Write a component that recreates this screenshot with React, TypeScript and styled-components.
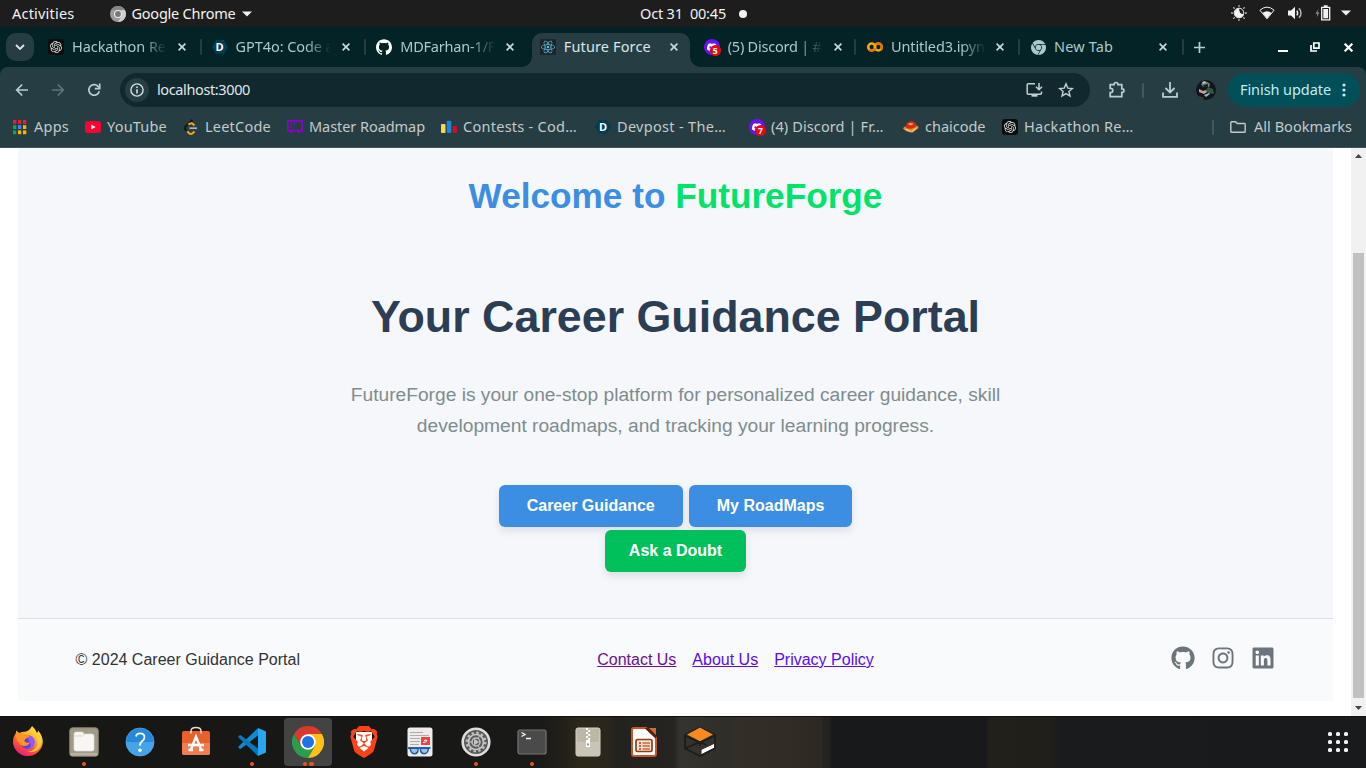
import React, { useLayoutEffect, useRef, useState } from 'react';
import styled, { createGlobalStyle } from 'styled-components';
import { FaGithub, FaInstagram, FaLinkedin } from 'react-icons/fa';
import { SiOpenai, SiReact, SiDiscord, SiGooglechrome, SiBrave, SiGithub } from 'react-icons/si';

const UI_FONT = '"Noto Sans", "Open Sans", sans-serif';
const PAGE_FONT = '"Liberation Sans", Arial, sans-serif';

const GlobalStyle = createGlobalStyle`
  *, *::before, *::after { box-sizing: border-box; }
  body { margin: 0; background: #fff; overflow: hidden; }
  svg { display: block; flex: none; }
`;

const Screen = styled.div`
  width: 1366px;
  height: 768px;
  display: flex;
  flex-direction: column;
  overflow: hidden;
  font-family: ${UI_FONT};
  font-size: 14.5px;
`;

/* ---------- label whose tracking is tuned to a given width ---------- */

const LabelText = styled.span`
  white-space: pre;
  flex: none;
  line-height: 20px;
  margin-bottom: 2px;
`;

function Label({ width, children }: { width: number; children: string }) {
  const ref = useRef<HTMLSpanElement>(null);
  const [spacing, setSpacing] = useState(0);
  useLayoutEffect(() => {
    if (ref.current) {
      const natural = ref.current.getBoundingClientRect().width;
      setSpacing((width - natural) / children.length);
    }
  }, [width, children]);
  return (
    <LabelText ref={ref} style={{ letterSpacing: spacing }}>
      {children}
    </LabelText>
  );
}

/* ---------- desktop top bar ---------- */

const TopBar = styled.header`
  height: 27px;
  flex: none;
  background: #1d1d1d;
  color: #f2f2f2;
  display: grid;
  grid-template-columns: 1fr auto 1fr;
  align-items: center;
  padding: 0 15px 0 12px;
`;

const TopLeft = styled.div`
  display: flex;
  align-items: center;
`;

const AppMenu = styled.div`
  display: flex;
  align-items: center;
  gap: 6px;
  margin-left: 35px;
`;

const Clock = styled.div`
  display: flex;
  align-items: center;
  gap: 13px;
  margin-left: 24px;
`;

const NoticeDot = styled.i`
  width: 8px;
  height: 8px;
  border-radius: 50%;
  background: #f2f2f2;
`;

const Tray = styled.div`
  display: flex;
  justify-content: flex-end;
  align-items: center;
  gap: 12px;
  padding-bottom: 1px;

  & > :last-child {
    margin-left: -2px;
  }
`;

const Caret = () => (
  <svg width="10" height="6" viewBox="0 0 10 6"><path d="M0 .5h10L5 5.500z" fill="#f2f2f2" /></svg>
);

const GreyChromeIcon = () => (
  <svg width="16" height="16" viewBox="0 0 16 16">
    <circle cx="8" cy="8" r="8" fill="#9a9a9a" />
    <path d="M1.100 4A8 8 0 0 1 14.900 4H8z" fill="#868686" />
    <path d="M14.900 4A8 8 0 0 1 8 16l3.500-6V4z" fill="#cfcfcf" />
    <circle cx="8" cy="8" r="4" fill="#eee" />
    <circle cx="8" cy="8" r="2.900" fill="#777" />
  </svg>
);

const NightLightIcon = () => (
  <svg width="16" height="16" viewBox="0 0 16 16">
    <g stroke="#d8d8d8" strokeWidth="1.300">
      <path d="M8 .2v1.600M8 14.200v1.600M.2 8h1.600M14.200 8h1.600M2.400 2.400l1.200 1.200M12.400 12.400l1.200 1.200M2.400 13.600l1.200-1.200M12.400 3.600l1.200-1.200" />
    </g>
    <path d="M8 3.500A4.600 4.600 0 1 0 12.600 9Q8.500 9.500 8 3.500z" fill="#f2f2f2" />
    <circle cx="8" cy="8" r="4.800" fill="none" stroke="#f2f2f2" strokeWidth="1" />
  </svg>
);

const WifiIcon = () => (
  <svg width="16" height="14" viewBox="0 0 16 14">
    <path d="M.9 4.200Q8-2 15.100 4.200L8 12.800z" fill="none" stroke="#f2f2f2" strokeWidth="1" />
    <path d="M3.600 6.800Q8 3.800 12.400 6.800L8 12.800z" fill="#f2f2f2" />
  </svg>
);

const VolumeIcon = () => (
  <svg width="16" height="14" viewBox="0 0 16 14">
    <path d="M1 4.500h3L8 .8v12.400L4 9.500H1z" fill="#f2f2f2" />
    <g fill="none" stroke="#f2f2f2" strokeWidth="1.400">
      <path d="M9.800 4.600q1.800 2.400 0 4.800" />
      <path d="M12 2.200q4 4.800 0 9.600" stroke="#bbb" />
    </g>
  </svg>
);

const BatteryIcon = () => (
  <svg width="16" height="16" viewBox="0 0 16 16">
    <path d="M3.500 4 .4 8.800h2L1.600 12.500 4.500 7.500h-2z" fill="#8b8b8b" />
    <path d="M6.700 2.300h8v12.500h-8z" fill="none" stroke="#f2f2f2" strokeWidth="1.300" />
    <path d="M8.300 4h4.800v9.300H8.300zM8.800.3h3.800v2H8.800z" fill="#f2f2f2" />
  </svg>
);

/* ---------- browser tab strip ---------- */

const TabStrip = styled.div`
  height: 40px;
  flex: none;
  background: #042326;
  color: #a9c9cb;
  display: flex;
  align-items: flex-start;
  padding: 6px 13.500px 0 6px;
`;

const TabSearch = styled.button`
  width: 28px;
  height: 28px;
  margin-right: 6px;
  padding: 0;
  border: 0;
  border-radius: 10px;
  background: #263e43;
  display: grid;
  place-items: center;
`;

const TabBox = styled.div<{ $active?: boolean; $divider?: boolean; $inset?: number }>`
  position: relative;
  width: 163.6px;
  height: 34px;
  padding: 0 0 6px ${(p) => p.$inset ?? 8}px;
  display: flex;
  align-items: center;
  flex: none;
  color: ${(p) => (p.$active ? '#dce5e7' : '#a9c9cb')};

  ${(p) =>
    p.$active &&
    `
    z-index: 1;
    background: #263e43;
    border-radius: 10px 10px 0 0;
    width: 158px;
    margin: 0 4.600px 0 1px;
    &::before, &::after {
      content: '';
      position: absolute;
      bottom: 0;
      width: 10px;
      height: 10px;
    }
    &::before { left: -10px; background: radial-gradient(circle at 0 0, transparent 9.5px, #263e43 10px); }
    &::after { right: -10px; background: radial-gradient(circle at 100% 0, transparent 9.5px, #263e43 10px); }
  `}

  ${(p) =>
    p.$divider &&
    `
    &::after {
      content: '';
      position: absolute;
      right: 1.500px;
      top: 6px;
      width: 2px;
      height: 16px;
      border-radius: 1px;
      background: #263e43;
    }
  `}
`;

const TabTitle = styled.div`
  width: 94px;
  margin-left: 8px;
  display: flex;
  mask-image: linear-gradient(90deg, #000 70px, transparent 95px);
`;

const TabTitlePlain = styled(TabTitle)`
  mask-image: none;
`;

const TabClose = styled.span<{ $gap?: number }>`
  margin-left: ${(p) => p.$gap ?? 12}px;
`;

const CloseGlyph = ({ size = 8, color = '#c8dcdd', weight = 1.6 }) => (
  <svg width={size} height={size} viewBox="0 0 8 8">
    <path d="M.6.6l6.800 6.800M7.400.6.6 7.400" stroke={color} strokeWidth={weight} />
  </svg>
);

const NewTabButton = styled.span`
  height: 28px;
  width: 28px;
  display: grid;
  place-items: center;
`;

const WindowControls = styled.div`
  margin-left: auto;
  height: 28px;
  display: flex;
  align-items: center;
  gap: 22px;

  & > :last-child {
    margin-left: 1.500px;
  }
`;

const Badge = styled.span`
  position: absolute;
  right: -1px;
  bottom: -1px;
  width: 11px;
  height: 11px;
  border-radius: 50%;
  background: #e50914;
  color: #fff;
  font: 700 8.500px/11px "Open Sans", sans-serif;
  text-align: center;
`;

const FaviconBox = styled.span<{ $bg?: string; $radius?: number }>`
  position: relative;
  width: 16px;
  height: 16px;
  flex: none;
  display: grid;
  place-items: center;
  background: ${(p) => p.$bg || 'transparent'};
  border-radius: ${(p) => p.$radius ?? 0}px;
`;

const GptFavicon = () => (
  <FaviconBox $bg="#0d0d0d" $radius={3}><SiOpenai size={12} color="#e8e8e8" /></FaviconBox>
);
const DiscordFavicon = ({ count }: { count: string }) => (
  <FaviconBox $bg="#6a11f5" $radius={8}>
    <SiDiscord size={10} color="#fff" />
    <Badge>{count}</Badge>
  </FaviconBox>
);

const DevpostLetter = styled.span`
  position: absolute;
  inset: 0;
  color: #fff;
  font: 700 11px/16px "Open Sans", sans-serif;
  text-align: center;
`;
const DevpostFavicon = () => (
  <FaviconBox>
    <svg width="16" height="16" viewBox="0 0 16 16"><path d="M4 1h8l4 7-4 7H4L0 8z" fill="#003e54" /></svg>
    <DevpostLetter>D</DevpostLetter>
  </FaviconBox>
);
const ReactFavicon = () => (
  <FaviconBox $bg="#20232a" $radius={1}><SiReact size={14} color="#61dafb" opacity=".85" /></FaviconBox>
);
const ColabFavicon = () => (
  <svg width="16" height="16" viewBox="0 0 16 16">
    <g fill="none" strokeWidth="2.500">
      <circle cx="11.300" cy="8" r="3.500" stroke="#f9ab00" />
      <circle cx="4.700" cy="8" r="3.500" stroke="#f9ab00" />
      <path d="M2.200 10.500A3.500 3.500 0 0 0 8 9.200M8.800 5.500a3.500 3.500 0 0 1 5 5" stroke="#e8710a" />
    </g>
  </svg>
);

/* ---------- toolbar ---------- */

const ToolbarWrap = styled.div`
  flex: none;
  background: #042326;
`;

const Toolbar = styled.div`
  height: 46px;
  background: #263e43;
  border-radius: 8px 8px 0 0;
  display: flex;
  align-items: center;
  padding: 0 6px 0 4px;
`;

const ToolButton = styled.span`
  width: 36px;
  height: 34px;
  display: grid;
  place-items: center;
  flex: none;
`;

const Omnibox = styled.div`
  flex: 1;
  height: 34px;
  margin: 0 9px 0 8px;
  padding: 0 16px 0 5px;
  border-radius: 17px;
  background: #10282e;
  color: #e1e7e8;
  display: flex;
  align-items: center;
`;

const SiteInfo = styled.span`
  width: 24px;
  height: 24px;
  margin-right: 8px;
  border-radius: 50%;
  background: #263e43;
  display: grid;
  place-items: center;
`;

const OmniboxActions = styled.span`
  margin-left: auto;
  display: flex;
  align-items: center;
  gap: 15px;
`;

const ToolDivider = styled.i`
  width: 2px;
  height: 15px;
  margin: 0 8px 0 7px;
  border-radius: 1px;
  background: #43585d;
`;

const UpdateButton = styled.button`
  height: 34px;
  width: 132px;
  margin-left: 4px;
  padding: 0 14px 0 12px;
  border: 0;
  border-radius: 17px;
  background: #004f59;
  color: #c2ecf2;
  font: inherit;
  display: flex;
  align-items: center;
  justify-content: space-between;
`;

const ICON = '#b4d0d2';

const BackIcon = ({ dim }: { dim?: boolean }) => (
  <svg width="14" height="14" viewBox="0 0 14 14">
    <path
      d={dim ? 'M1 7h11M6.800 1.500 12.300 7l-5.500 5.500' : 'M13 7H2M7.200 1.500 1.700 7l5.500 5.500'}
      fill="none"
      stroke={dim ? '#5e7579' : ICON}
      strokeWidth="1.700"
    />
  </svg>
);
const ReloadIcon = () => (
  <svg width="14" height="14" viewBox="0 0 14 14">
    <path d="M12.300 8.200A5.300 5.300 0 1 1 11 3.300L12.500 5" fill="none" stroke={ICON} strokeWidth="1.700" />
    <path d="M12.700.6v5H7.800" fill="none" stroke={ICON} strokeWidth="1.700" />
  </svg>
);
const InfoIcon = () => (
  <svg width="14" height="14" viewBox="0 0 14 14">
    <circle cx="7" cy="7" r="6.100" fill="none" stroke="#d5e0e1" strokeWidth="1.400" />
    <path d="M6.200 6.200h1.600v4.400H6.200zM6.200 3.400h1.600V5H6.200z" fill="#d5e0e1" />
  </svg>
);
const InstallIcon = () => (
  <svg width="17" height="16" viewBox="0 0 17 16">
    <path d="M9 1.800H2.200q-1 0-1 1v8.400q0 1 1 1h12.300q1 0 1-1V9.500" fill="none" stroke="#c4cfd1" strokeWidth="1.500" />
    <path d="M5.500 12h6v2.700h-6z" fill="#c4cfd1" />
    <path d="M13 1v6.200M10 4.700l3 3 3-3" fill="none" stroke="#c4cfd1" strokeWidth="1.500" />
  </svg>
);
const StarIcon = () => (
  <svg width="16" height="16" viewBox="0 0 16 16">
    <path d="M8 1.800l1.800 4.300 4.600.4-3.500 3 1.100 4.600-4-2.500-4 2.500 1.100-4.600-3.500-3 4.600-.4z" fill="none" stroke="#c4cfd1" strokeWidth="1.400" />
  </svg>
);
const PuzzleIcon = () => (
  <svg width="18" height="18" viewBox="0 0 18 18">
    <path d="M2.200 3.700h3.900V3.400a1.900 1.900 0 0 1 3.800 0v.3h3.900v4.100h.4a1.800 1.800 0 0 1 0 3.600h-.4v4.300H2.200v-4h.4a2.200 2.200 0 0 0 0-4.400h-.4z" fill="none" stroke={ICON} strokeWidth="1.700" />
  </svg>
);
const DownloadIcon = () => (
  <svg width="16" height="16" viewBox="0 0 16 16">
    <path d="M8 0v10M3.500 6 8 10.500 12.500 6M1 10.500v4.400h14v-4.400" fill="none" stroke={ICON} strokeWidth="1.800" />
  </svg>
);
const AvatarIcon = () => (
  <svg width="20" height="20" viewBox="0 0 20 20">
    <defs><clipPath id="avatar-clip"><circle cx="10" cy="10" r="10" /></clipPath></defs>
    <g clipPath="url(#avatar-clip)">
      <path d="M0 0h20v20H0z" fill="#12141e" />
      <path d="M5 4q5-5 9 0l-1 3H7z" fill="#74827c" />
      <path d="M6 2l3-1 1 2-3 1z" fill="#bac2bd" />
      <path d="M7 5l5-1v3L8 8z" fill="#202427" />
      <path d="M12 7l5 2 1 5-6-1-2-3z" fill="#31583a" />
      <path d="M3 9l4 2 3-1 1 2-3 2-5-2z" fill="#c6a494" />
      <path d="M8 15l5-2 1 1-4 3z" fill="#9db2c9" />
      <path d="M3 16l5 2-2 2H2z" fill="#4a3d3a" />
    </g>
  </svg>
);
const MoreDots = () => (
  <svg width="4" height="14" viewBox="0 0 4 14" fill="#c2ecf2">
    <circle cx="2" cy="2" r="1.600" /><circle cx="2" cy="7" r="1.600" /><circle cx="2" cy="12" r="1.600" />
  </svg>
);

/* ---------- bookmarks bar ---------- */

const BookmarkBar = styled.nav`
  height: 35px;
  flex: none;
  background: #263e43;
  border-bottom: 1px solid #3f5559;
  color: #c4c9ca;
  display: flex;
  align-items: center;
  padding: 0 14px 6px 12px;
`;

const Bookmark = styled.span<{ $slot?: number }>`
  display: flex;
  align-items: center;
  gap: 6px;
  flex: none;
  width: ${(p) => (p.$slot ? `${p.$slot}px` : 'auto')};
`;

const AllBookmarks = styled(Bookmark)`
  margin-left: auto;
  gap: 8px;
`;

const AppsIcon = () => {
  const colors = ['#f01b33', '#f01b33', '#f01b33', '#12a45a', '#4a83f0', '#fbb300', '#12a45a', '#fbb300', '#fbb300'];
  return (
    <svg width="16" height="16" viewBox="0 0 16 16">
      {colors.map((c, i) => (
        <rect key={i} x={1 + (i % 3) * 5} y={1 + Math.floor(i / 3) * 5.2} width="3.300" height="3.800" fill={c} />
      ))}
    </svg>
  );
};
const YouTubeIcon = () => (
  <svg width="16" height="16" viewBox="0 0 16 16">
    <rect y="2" width="16" height="12" rx="3" fill="#ff0033" />
    <path d="M6.300 5.600 10.600 8l-4.300 2.400z" fill="#fff" />
  </svg>
);
const LeetIcon = () => (
  <svg width="16" height="16" viewBox="0 0 16 16">
    <path d="M9.500.8 2.400 7.600q-1.300 1.500 0 3l3 3" fill="none" stroke="#151515" strokeWidth="2" />
    <path d="M4.200 12.300l2 2q1.700 1.300 3.400 0l1.900-1.800M5.500 5.800l1-1q1.800-1.200 3.200 0l1.800 1.800" fill="none" stroke="#ffa116" strokeWidth="2" />
    <path d="M6.500 9.200H14" stroke="#b3b3b3" strokeWidth="1.700" />
  </svg>
);
const RoadmapIcon = () => (
  <svg width="16" height="16" viewBox="0 0 16 16">
    <path d="M.8 1.800h14.400v9.900H.8z" fill="none" stroke="#8804c8" strokeWidth="1.700" />
    <path d="M3 4h2v1.600H3zM6.500 4h2v1.600h-2zM3 7.500h2v1.600H3zM2 12l2 3 2-3zM10 12l2 3 2-3z" fill="#8804c8" />
  </svg>
);
const CodeforcesIcon = () => (
  <svg width="16" height="16" viewBox="0 0 16 16">
    <rect y="5" width="4.500" height="9" rx="1" fill="#f8d64e" />
    <rect x="5.800" y="1.700" width="4.500" height="12.300" rx="1" fill="#1c86d8" />
    <rect x="11.500" y="6.800" width="4.500" height="7.200" rx="1" fill="#c1132b" />
  </svg>
);
const ChaiIcon = () => (
  <svg width="16" height="16" viewBox="0 0 16 16">
    <path d="M0 9.500Q1 7 5 7l9-.5q2 1 1.500 2.500L10 13.500Q4 14 0 9.500z" fill="#d98a32" />
    <path d="M3 6.500Q4 2 9 2.200q4.500 1 4.500 4.800Q10 11 3 9z" fill="#d22b16" />
    <path d="M5 5Q7.500 3.200 10.500 5 8 7.500 5 5z" fill="#f5a049" />
    <path d="M2 10l6.500 2.500L13.500 9" fill="none" stroke="#f2dcae" />
  </svg>
);
const FolderIcon = () => (
  <svg width="16" height="16" viewBox="0 0 16 16">
    <path d="M.8 3.500q0-.8.8-.8h4l1.600 1.800h7.200q.8 0 .8.8v7.200q0 .8-.8.8H1.600q-.8 0-.8-.8z" fill="none" stroke="#c4c9ca" strokeWidth="1.400" />
  </svg>
);

/* ---------- web page ---------- */

const Viewport = styled.main`
  height: 568px;
  flex: none;
  display: flex;
  background: #fff;
  font-family: ${PAGE_FONT};
  font-size: 16px;
`;

const Site = styled.div`
  width: 1315px;
  height: 553px;
  margin: 0 18px;
  display: flex;
  flex-direction: column;
  background: #f5f7fb;
`;

const Hero = styled.section`
  height: 470px;
  padding-top: 28px;
  display: flex;
  flex-direction: column;
  align-items: center;
`;

const Welcome = styled.h2`
  margin: 0;
  font-size: 35.2px;
  line-height: 40px;
  font-weight: 700;
  color: #3b8ee2;
`;

const Brand = styled.span`
  color: #00e36b;
`;

const Title = styled.h1`
  margin: 73px 0 0;
  font-size: 44.8px;
  line-height: 55px;
  font-weight: 700;
  color: #2c3e54;
`;

const Lead = styled.p`
  width: 700px;
  margin: 36px 0 43.560px;
  font-size: 19.2px;
  line-height: 30.72px;
  text-align: center;
  color: #7f8c8d;
`;

const Actions = styled.div`
  display: flex;
  flex-wrap: wrap;
  justify-content: center;
  gap: 3px 6px;
  width: 400px;
`;

const ActionButton = styled.button<{ $accent?: boolean }>`
  height: 42px;
  padding: 0 ${(p) => (p.$accent ? 24 : 28)}px;
  border: 0;
  border-radius: 6px;
  background: ${(p) => (p.$accent ? '#00c05c' : '#3b8ee2')};
  box-shadow: 0 4px 8px rgba(0, 0, 0, 0.1);
  color: #fff;
  font: 700 16px/18px ${PAGE_FONT};
`;

const Footer = styled.footer`
  height: 83px;
  padding: 0 58px 0 57.600px;
  border-top: 1px solid #dcdfe3;
  background: #f8fafc;
  color: #333;
  display: flex;
  align-items: center;
  justify-content: space-between;
`;

const FooterLinks = styled.div`
  display: flex;
  gap: 16px;
`;

const FooterLink = styled.a<{ $visited?: boolean }>`
  color: ${(p) => (p.$visited ? '#6b0f94' : '#5a0cf0')};
  text-decoration: underline;
`;

const Socials = styled.div`
  display: flex;
  gap: 16px;
  margin-bottom: 4px;
  color: #6c757d;
`;

const ScrollTrack = styled.div`
  width: 15px;
  background: #f1f1f1;
  display: flex;
  flex-direction: column;
  align-items: center;
  padding: 6px 0;
`;

const ScrollThumb = styled.div`
  width: 11px;
  height: 445px;
  margin: 95px 0 8px;
  background: #c1c1c1;
`;

const ScrollArrow = ({ down }: { down?: boolean }) => (
  <svg width="7" height="4" viewBox="0 0 7 4"><path d={down ? 'M0 0h7L3.500 4z' : 'M0 4h7L3.500 0z'} fill="#444" /></svg>
);

/* ---------- dock ---------- */

const Dock = styled.footer`
  height: 52px;
  flex: none;
  display: flex;
  align-items: center;
  gap: 8px;
  padding: 0 18px 0 4px;
  box-shadow: inset 0 1px 0 #111;
  background: linear-gradient(
    90deg,
    #171716 0, #171716 400px, #1a1a19 540px, #201e19 558px, #2d271b 580px, #2b261c 608px,
    #23221e 616px, #252420 674px, #35332d 680px, #302e29 728px, #332f28 736px, #302b25 800px,
    #2d2922 821px, #24231f 824px, #21211e 830px, #18191b 832px, #18191b 986px,
    #21201b 989px, #201f1a 1052px, #1a1b1d 1060px, #191a1c 1366px
  );
`;

const DockItem = styled.div<{ $active?: boolean }>`
  position: relative;
  width: 48px;
  height: 48px;
  border-radius: 4px;
  display: grid;
  place-items: center;
  background: ${(p) => (p.$active ? '#434343' : 'transparent')};
`;

const Running = styled.span`
  position: absolute;
  left: 0;
  right: 0;
  bottom: 0;
  display: flex;
  justify-content: center;
  gap: 2px;
`;

const RunDot = styled.i`
  width: 4.500px;
  height: 4.500px;
  border-radius: 50%;
  background: #e95420;
`;

const AppGrid = styled.div`
  margin-left: auto;
  display: grid;
  grid-template-columns: repeat(3, 4px);
  gap: 4px;
`;

const GridDot = styled.i`
  width: 4px;
  height: 4px;
  border-radius: 1.500px;
  background: #f4f4f4;
`;

const FirefoxIcon = () => (
  <svg width="32" height="32" viewBox="0 0 32 32">
    <defs>
      <linearGradient id="fx" x1=".8" y1="0" x2=".25" y2="1">
        <stop offset="0" stopColor="#fff34f" /><stop offset=".35" stopColor="#ffb52b" />
        <stop offset=".65" stopColor="#ff5b35" /><stop offset="1" stopColor="#f0147f" />
      </linearGradient>
    </defs>
    <path d="M20 0q3.500 3 5 7 1-.8 1.200-2.500 4.800 6 4.600 12A15 15 0 0 1 1 17Q.8 11 4 7V4.500l3.500 2.700Q10 5.500 13 5.800 18 4.500 20 0z" fill="url(#fx)" />
    <circle cx="15.500" cy="16" r="7" fill="#6a3fd0" />
    <path d="M15 10q6-1 8 5 0 7-7 8 4-3 2-6z" fill="#9159ff" />
    <path d="M3.500 8Q9 5.500 13 8.500l5 .3q-.5 2.500-4 3.700-2 1-1.500 3 2.500 2 5.500 1-2 4-6.500 3.500-6-1-8-12z" fill="#ff9526" />
    <path d="M19 5q7 5 6.500 12-1 8-10 9 13 1 14-11Q29 10 26 6l-1 3-5-8z" fill="#ffcf38" />
  </svg>
);
const FilesIcon = () => (
  <svg width="30" height="30" viewBox="0 0 30 30">
    <rect x=".7" y=".7" width="28.600" height="28.600" rx="3" fill="#a19a87" stroke="#7f7969" />
    <path d="M1.500 26h27v2.500h-27z" fill="#b9b3a2" />
    <path d="M5 7q0-2 2-2h6q1.500 0 2 2h8q2 0 2 2v13q0 2-2 2H7q-2 0-2-2z" fill="#f7f6f3" stroke="#e3e0d8" strokeWidth=".6" />
    <path d="M5 9h8.500L16 7" fill="none" stroke="#d3cfc3" strokeWidth=".8" />
  </svg>
);
const HelpIcon = () => (
  <svg width="30" height="30" viewBox="0 0 30 30">
    <circle cx="15" cy="15" r="14" fill="#2488db" />
    <path d="M1 15a14 14 0 0 0 28 0z" fill="#46a3e7" />
    <circle cx="15" cy="15" r="14" fill="none" stroke="#55ace9" strokeWidth=".7" />
    <path d="M11 9.500Q11.500 6.300 15 6.300q4.500 0 4.500 4 0 2.500-2.500 4-2 1.400-2 4.200" fill="none" stroke="#fff" strokeWidth="1.800" />
    <circle cx="15" cy="23.300" r="1.800" fill="#fff" />
  </svg>
);
const SoftwareIcon = () => (
  <svg width="30" height="32" viewBox="0 0 30 32">
    <rect x="1" y="5" width="28" height="24" rx="2" fill="#e9602b" />
    <path d="M1 17h28v10q0 2-2 2H3q-2 0-2-2z" fill="#f07c52" />
    <path d="M10 23.500 15 10.500l5 13M7 19h16M7.500 24h4.500M18 24h4.500" fill="none" stroke="#fff" strokeWidth="2.400" />
    <path d="M10 7.500V5q0-3.500 5-3.500T20 5v2.500" fill="none" stroke="#e5dcc9" strokeWidth="1.500" />
  </svg>
);
const CodeIcon = () => (
  <svg width="28" height="28" viewBox="0 0 28 28">
    <path d="M20 0 .5 18.500v1.600l2 .9L20 7.500z" fill="#0d8ad1" />
    <path d="M20 20.500 2.500 7 .5 8v1.600L20 28z" fill="#0879bf" />
    <path d="M20 0l8 3.400v21.200L20 28z" fill="#2aa5f0" />
  </svg>
);
const ChromeIcon = () => (
  <svg width="32" height="32" viewBox="0 0 32 32">
    <path d="M2.140 8A16 16 0 0 0 16 32l6.930-12H9.070z" fill="#2c9e4b" />
    <path d="M29.860 8A16 16 0 0 1 16 32l6.930-12L16 8z" fill="#fbc116" />
    <path d="M2.140 8A16 16 0 0 1 29.860 8H16L9.070 20z" fill="#d93a30" />
    <circle cx="16" cy="16" r="7.800" fill="#fff" />
    <circle cx="16" cy="16" r="6" fill="#1a73e8" />
  </svg>
);

const BraveBox = styled.span`
  display: grid;
  place-items: center;
  background: linear-gradient(#fff, #fff) center / 16px 21px no-repeat;
`;

const BraveIcon = () => (
  <BraveBox><SiBrave size={32} color="#fb4218" /></BraveBox>
);

const ReaderIcon = () => (
  <svg width="26" height="30" viewBox="0 0 26 30">
    <rect x=".5" y=".5" width="25" height="29" rx="2.500" fill="#ececec" />
    <path d="M3 5.500h13M3 8.500h19M3 11.500h10M3 14.500h10M3 17.500h9" stroke="#b3ada1" strokeWidth="1" />
    <rect x="14" y="10" width="9" height="8" fill="#e84545" />
    <path d="M16 15.500q3 .5 4-2-2.500-1.500-3 .8" fill="none" stroke="#fff" />
    <path d="M3 21.300h8q.5 5-3 5.500-4 .2-5-5.500zM13.500 21.300h8q-.5 5.500-4.500 5.500-4-.5-3.500-5.500z" fill="#9cbfe6" stroke="#1f58a3" strokeWidth="1.400" />
    <path d="M1 21h22.500" stroke="#1f58a3" strokeWidth="1.800" />
  </svg>
);
const SettingsIcon = () => (
  <svg width="30" height="30" viewBox="0 0 30 30">
    <circle cx="15" cy="15" r="13.300" fill="#5a5a5a" stroke="#dedede" strokeWidth="2.600" />
    <circle cx="15" cy="15" r="9.300" fill="none" stroke="#c5c5c5" strokeWidth="2.200" strokeDasharray="2.400 2.470" />
    <circle cx="15" cy="15" r="7.500" fill="#5a5a5a" stroke="#c5c5c5" strokeWidth="1.700" />
    <circle cx="15" cy="15" r="4" fill="none" stroke="#c5c5c5" strokeWidth="1.500" />
    <path d="M13.500 12.500v5l4-2.500zM8 15h3M17 11.500l1.500-2.500M17 18.500l1.500 2.500" fill="#c5c5c5" stroke="#c5c5c5" />
  </svg>
);
const TerminalIcon = () => (
  <svg width="30" height="26" viewBox="0 0 30 26">
    <rect x="1" y="1" width="28" height="24" rx="2" fill="#4a4a4a" stroke="#757575" strokeWidth="1.200" />
    <path d="M4.500 3.500 8 5.500l-3.500 2M9 9.500h5" fill="none" stroke="#f1f1f1" strokeWidth="1.400" />
  </svg>
);
const ArchiveIcon = () => (
  <svg width="26" height="30" viewBox="0 0 26 30">
    <rect x="1" y="1" width="24" height="28" rx="2" fill="#bdb7a6" stroke="#d8d4c8" />
    <path d="M1.500 15h23v13h-23z" fill="#c9c4b6" />
    <path d="M12 1v13M14.200 3v11" stroke="#fff" strokeWidth="2" strokeDasharray="2 2" />
    <path d="M11 13h4v7h-4z" fill="#fff" /><path d="M12.200 16.500h1.600v2h-1.600z" fill="#777" />
  </svg>
);
const ImpressIcon = () => (
  <svg width="26" height="30" viewBox="0 0 26 30">
    <path d="M2.500 1H15l10 10v16q0 2-2 2H3q-2 0-2-2V2.500Q1 1 2.500 1z" fill="#fff" stroke="#c5562a" strokeWidth="2" />
    <path d="M13.500 1H25v10.500z" fill="#4a2515" /><path d="M18 1h7v7z" fill="#d46a38" />
    <rect x="5" y="12.500" width="16" height="12" rx="1.500" fill="#f6e1d3" stroke="#8e3c18" strokeWidth="1.700" />
    <path d="M8 16h2M8 19h2M8 22h2" stroke="#9c3c11" strokeWidth="1.700" /><path d="M11.500 16H19M11.500 19H19M11.500 22H19" stroke="#d1672f" strokeWidth="1.700" />
  </svg>
);
const CrateIcon = () => (
  <svg width="32" height="32" viewBox="0 0 32 32">
    <path d="M16 1.500 31 9v13.500L16 30 1 22.500V9z" fill="#34322c" stroke="#1c1c1a" strokeWidth="1.700" />
    <path d="M1 22.500 16 16l6 3M1 9.500l15 7 15-7M16 16v4" fill="none" stroke="#1c1c1a" strokeWidth="1.700" />
    <path d="M16 1.500 29 8.500 16 15.300 3 8.500z" fill="#f58a1f" />
    <path d="M17 23.500l13.500-6.300v4.800L17 28.800z" fill="#fff" stroke="#262626" />
  </svg>
);

const TABS = [
  { title: 'Hackathon Re', width: 94, icon: <GptFavicon />, divider: true },
  { title: 'GPT4o: Code a', width: 98, icon: <DevpostFavicon />, divider: true },
  { title: 'MDFarhan-1/F', width: 95, icon: <SiGithub size={16} color="#fff" />, inset: 9 },
  { title: 'Future Force', width: 87, icon: <ReactFavicon />, active: true },
  { title: '(5) Discord | #', width: 94, icon: <DiscordFavicon count="5" />, divider: true, inset: 9.3 },
  { title: 'Untitled3.ipyn', width: 94, icon: <ColabFavicon />, divider: true, inset: 9, closeGap: 11 },
  { title: 'New Tab', width: 59, icon: <SiGooglechrome size={15} color="#a9c9cb" />, divider: true, plain: true, inset: 8.5, closeGap: 10.5 },
];

const BOOKMARKS = [
  { title: 'Apps', width: 35, slot: 73, icon: <AppsIcon /> },
  { title: 'YouTube', width: 60, slot: 98, icon: <YouTubeIcon /> },
  { title: 'LeetCode', width: 66, slot: 104, icon: <LeetIcon /> },
  { title: 'Master Roadmap', width: 116, slot: 154, icon: <RoadmapIcon /> },
  { title: 'Contests - Cod…', width: 114, slot: 154, icon: <CodeforcesIcon /> },
  { title: 'Devpost - The…', width: 109, slot: 154, icon: <DevpostFavicon /> },
  { title: '(4) Discord | Fr…', width: 112.5, slot: 154, icon: <DiscordFavicon count="7" /> },
  { title: 'chaicode', width: 60.5, slot: 99, icon: <ChaiIcon /> },
  { title: 'Hackathon Re…', width: 109.5, slot: 134, icon: <GptFavicon /> },
];

const DOCK_APPS = [
  { name: 'firefox', icon: <FirefoxIcon />, dots: 0 },
  { name: 'files', icon: <FilesIcon />, dots: 1 },
  { name: 'help', icon: <HelpIcon />, dots: 0 },
  { name: 'software', icon: <SoftwareIcon />, dots: 0 },
  { name: 'code', icon: <CodeIcon />, dots: 1 },
  { name: 'chrome', icon: <ChromeIcon />, dots: 2, active: true },
  { name: 'brave', icon: <BraveIcon />, dots: 0 },
  { name: 'reader', icon: <ReaderIcon />, dots: 0 },
  { name: 'settings', icon: <SettingsIcon />, dots: 1 },
  { name: 'terminal', icon: <TerminalIcon />, dots: 1 },
  { name: 'archive', icon: <ArchiveIcon />, dots: 0 },
  { name: 'impress', icon: <ImpressIcon />, dots: 0 },
  { name: 'crate', icon: <CrateIcon />, dots: 0 },
];

export default function App() {
  return (
    <Screen>
      <GlobalStyle />
      <TopBar>
        <TopLeft>
          <Label width={62.5}>Activities</Label>
          <AppMenu>
            <GreyChromeIcon />
            <Label width={104}>Google Chrome</Label>
            <Caret />
          </AppMenu>
        </TopLeft>
        <Clock>
          <Label width={86}>Oct 31  00:45</Label>
          <NoticeDot />
        </Clock>
        <Tray>
          <NightLightIcon />
          <WifiIcon />
          <VolumeIcon />
          <BatteryIcon />
          <Caret />
        </Tray>
      </TopBar>

      <TabStrip>
        <TabSearch>
          <svg width="10" height="6" viewBox="0 0 10 6"><path d="M1 1l4 4 4-4" fill="none" stroke="#dce5e7" strokeWidth="1.800" /></svg>
        </TabSearch>
        {TABS.map((t) => {
          const TitleBox = t.active || t.plain ? TabTitlePlain : TabTitle;
          return (
            <TabBox key={t.title} $active={t.active} $divider={t.divider} $inset={t.inset}>
              <FaviconBox>{t.icon}</FaviconBox>
              <TitleBox><Label width={t.width}>{t.title}</Label></TitleBox>
              <TabClose $gap={t.closeGap}><CloseGlyph /></TabClose>
            </TabBox>
          );
        })}
        <NewTabButton>
          <svg width="11" height="11" viewBox="0 0 11 11"><path d="M5.500 0v11M0 5.500h11" stroke={ICON} strokeWidth="1.700" /></svg>
        </NewTabButton>
        <WindowControls>
          <svg width="10" height="10" viewBox="0 0 10 10"><path d="M0 9h10" stroke="#fff" strokeWidth="2" /></svg>
          <svg width="10" height="10" viewBox="0 0 10 10"><path d="M3.800 1h5.200v5.200H3.800zM1 3v6h6" fill="none" stroke="#fff" strokeWidth="1.700" /></svg>
          <CloseGlyph size={9} color="#fff" weight={1.9} />
        </WindowControls>
      </TabStrip>

      <ToolbarWrap>
        <Toolbar>
          <ToolButton><BackIcon /></ToolButton>
          <ToolButton><BackIcon dim /></ToolButton>
          <ToolButton><ReloadIcon /></ToolButton>
          <Omnibox>
            <SiteInfo><InfoIcon /></SiteInfo>
            <Label width={93}>localhost:3000</Label>
            <OmniboxActions><InstallIcon /><StarIcon /></OmniboxActions>
          </Omnibox>
          <ToolButton><PuzzleIcon /></ToolButton>
          <ToolDivider />
          <ToolButton><DownloadIcon /></ToolButton>
          <ToolButton><AvatarIcon /></ToolButton>
          <UpdateButton><Label width={91}>Finish update</Label><MoreDots /></UpdateButton>
        </Toolbar>
      </ToolbarWrap>

      <BookmarkBar>
        {BOOKMARKS.map((b) => (
          <Bookmark key={b.title} $slot={b.slot}>{b.icon}<Label width={b.width}>{b.title}</Label></Bookmark>
        ))}
        <AllBookmarks>
          <ToolDivider />
          <FolderIcon />
          <Label width={98}>All Bookmarks</Label>
        </AllBookmarks>
      </BookmarkBar>

      <Viewport>
        <Site>
          <Hero>
            <Welcome>Welcome to <Brand>FutureForge</Brand></Welcome>
            <Title>Your Career Guidance Portal</Title>
            <Lead>
              FutureForge is your one-stop platform for personalized career guidance, skill
              development roadmaps, and tracking your learning progress.
            </Lead>
            <Actions>
              <ActionButton>Career Guidance</ActionButton>
              <ActionButton>My RoadMaps</ActionButton>
              <ActionButton $accent>Ask a Doubt</ActionButton>
            </Actions>
          </Hero>
          <Footer>
            <span>© 2024 Career Guidance Portal</span>
            <FooterLinks>
              <FooterLink $visited>Contact Us</FooterLink>
              <FooterLink>About Us</FooterLink>
              <FooterLink>Privacy Policy</FooterLink>
            </FooterLinks>
            <Socials>
              <FaGithub size={24} />
              <FaInstagram size={24} />
              <FaLinkedin size={24} />
            </Socials>
          </Footer>
        </Site>
        <ScrollTrack>
          <ScrollArrow />
          <ScrollThumb />
          <ScrollArrow down />
        </ScrollTrack>
      </Viewport>

      <Dock>
        {DOCK_APPS.map((a) => (
          <DockItem key={a.name} $active={a.active}>
            {a.icon}
            <Running>{Array.from({ length: a.dots }, (_, i) => <RunDot key={i} />)}</Running>
          </DockItem>
        ))}
        <AppGrid>{Array.from({ length: 9 }, (_, i) => <GridDot key={i} />)}</AppGrid>
      </Dock>
    </Screen>
  );
}
